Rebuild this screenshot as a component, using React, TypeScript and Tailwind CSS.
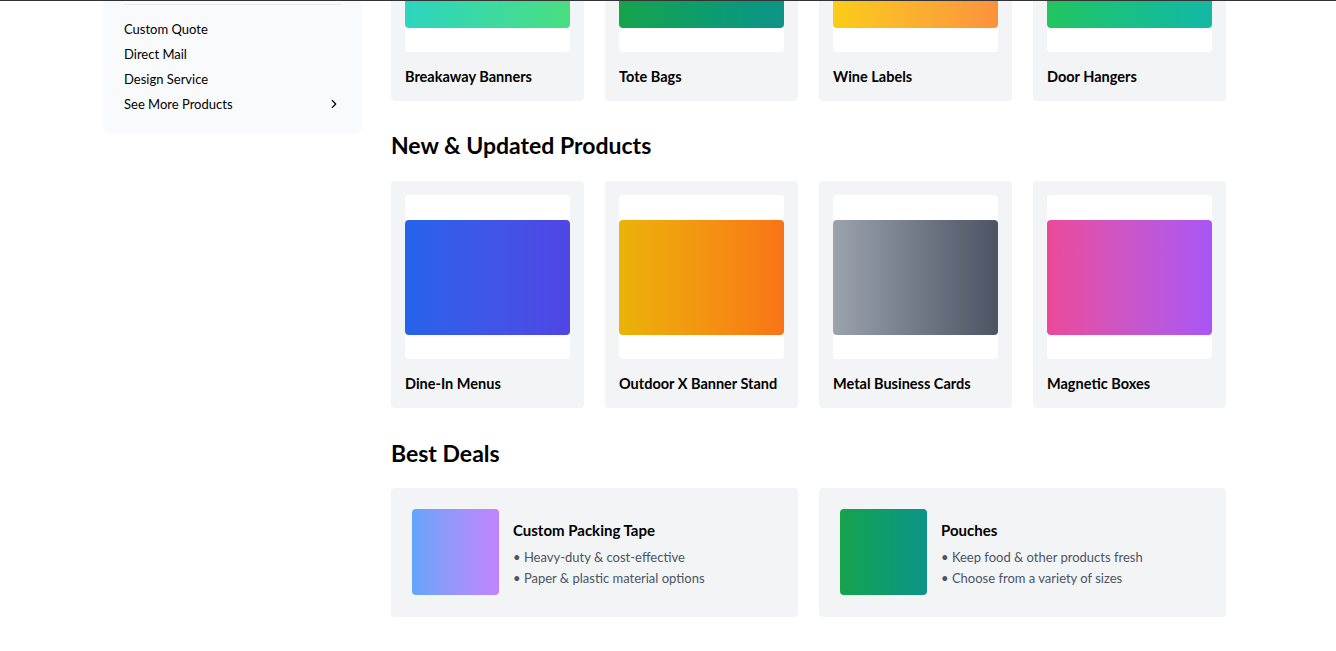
import { ChevronRight } from 'lucide-react';

const topRow = [
  { name: 'Breakaway Banners', grad: 'from-[#2dd4bf] to-[#4ade80]' },
  { name: 'Tote Bags', grad: 'from-[#16a34a] to-[#0d9488]' },
  { name: 'Wine Labels', grad: 'from-[#facc15] to-[#fb923c]' },
  { name: 'Door Hangers', grad: 'from-[#22c55e] to-[#14b8a6]' },
];

const newProducts = [
  { name: 'Dine-In Menus', grad: 'from-[#2563eb] to-[#4f46e5]' },
  { name: 'Outdoor X Banner Stand', grad: 'from-[#eab308] to-[#f97316]' },
  { name: 'Metal Business Cards', grad: 'from-[#9ca3af] to-[#4b5563]' },
  { name: 'Magnetic Boxes', grad: 'from-[#ec4899] to-[#a855f7]' },
];

const deals = [
  {
    name: 'Custom Packing Tape',
    grad: 'from-[#60a5fa] to-[#c084fc]',
    points: ['Heavy-duty & cost-effective', 'Paper & plastic material options'],
  },
  {
    name: 'Pouches',
    grad: 'from-[#16a34a] to-[#0d9488]',
    points: ['Keep food & other products fresh', 'Choose from a variety of sizes'],
  },
];

function ProductCard({ name, grad }: { name: string; grad: string }) {
  return (
    <a href="#" className="block rounded bg-[#f3f4f6] p-[14px]">
      <div className="flex h-[164px] items-center rounded bg-white">
        <div className={`h-[115px] w-full rounded bg-linear-to-r ${grad}`} />
      </div>
      <h3 className="mt-[15px] text-[14.5px] font-bold leading-5 text-black">{name}</h3>
    </a>
  );
}

export default function App() {
  return (
    <div
      className="h-screen overflow-hidden bg-white text-black"
      style={{ fontFamily: 'Lato, "Noto Sans", sans-serif' }}
    >
      <div className="h-px bg-[#333]" />
      <div className="overflow-hidden">
        <div className="ml-[103px] flex items-start gap-[29px] -mt-[127px]">
          <aside className="w-[259px] rounded-lg bg-[#f9fafb] px-[21px] pb-5 pt-[130px]">
            <div className="border-t border-[#e5e7eb]" />
            <nav className="mt-[14px] flex flex-col gap-[5px] text-[13px] leading-5">
              <a href="#">Custom Quote</a>
              <a href="#">Direct Mail</a>
              <a href="#">Design Service</a>
              <a href="#" className="flex items-center justify-between">
                <span>See More Products</span>
                <ChevronRight size={14} strokeWidth={2} />
              </a>
            </nav>
          </aside>

          <main className="w-[835px]">
            <div className="grid grid-cols-4 gap-[21px]">
              {topRow.map((p) => (
                <ProductCard key={p.name} {...p} />
              ))}
            </div>

            <h2 className="mt-[28px] mb-5 text-[23px] font-bold leading-8">New &amp; Updated Products</h2>
            <div className="grid grid-cols-4 gap-[21px]">
              {newProducts.map((p) => (
                <ProductCard key={p.name} {...p} />
              ))}
            </div>

            <h2 className="mt-[29px] mb-[19px] text-[23px] font-bold leading-8">Best Deals</h2>
            <div className="grid grid-cols-2 gap-[21px]">
              {deals.map((d) => (
                <a href="#" key={d.name} className="flex items-center gap-[14px] rounded bg-[#f3f4f6] p-[21px] pb-[22px]">
                  <div className={`h-[86px] w-[87px] shrink-0 rounded bg-linear-to-r ${d.grad}`} />
                  <div className="pt-[2px]">
                    <h3 className="mb-[5px] text-[15px] font-bold leading-6">{d.name}</h3>
                    <ul className="text-[13px] leading-[21px] text-[#4b5563]">
                      {d.points.map((pt) => (
                        <li key={pt}>• {pt}</li>
                      ))}
                    </ul>
                  </div>
                </a>
              ))}
            </div>
          </main>
        </div>
      </div>
    </div>
  );
}
